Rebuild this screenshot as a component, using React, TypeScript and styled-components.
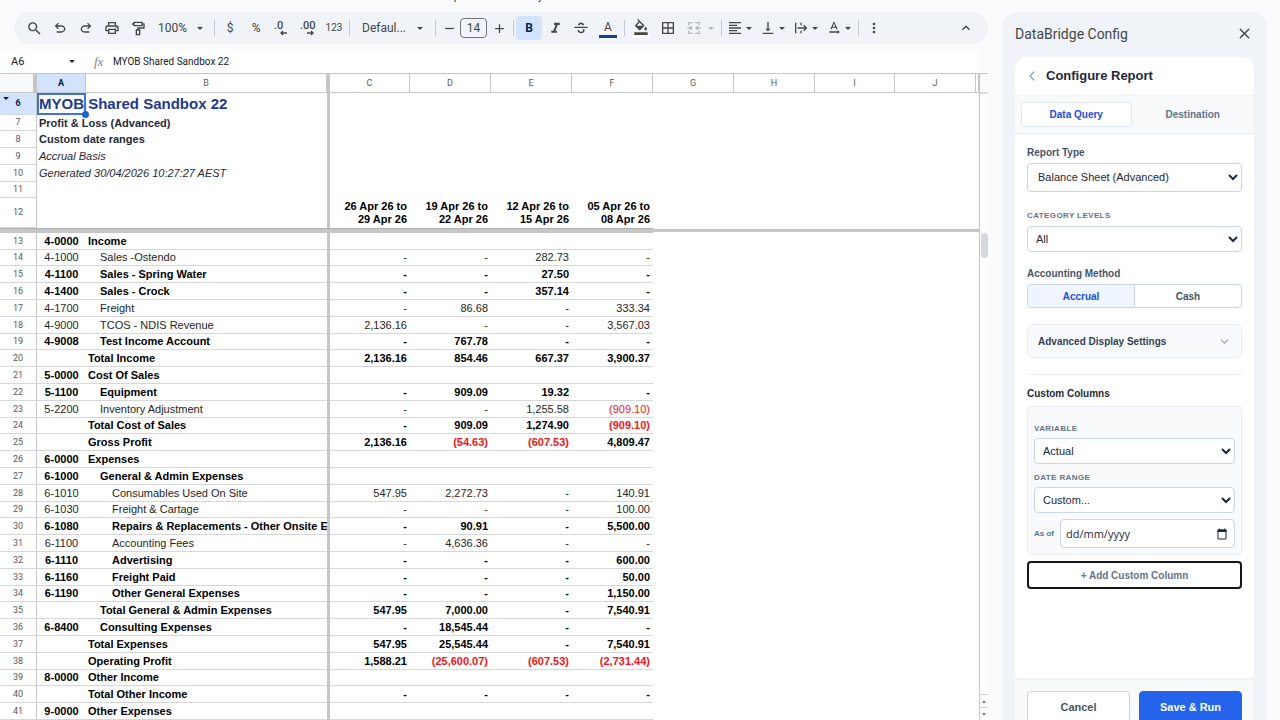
import React from "react";
import styled, { createGlobalStyle, css } from "styled-components";
import {
  MdSearch,
  MdOutlinePrint,
  MdFormatItalic,
  MdBorderAll,
  MdFormatAlignLeft,
  MdVerticalAlignBottom,
  MdTextRotationNone,
  MdMoreVert,
  MdKeyboardArrowUp,
  MdFormatColorFill,
  MdAdd,
  MdRemove,
} from "react-icons/md";
import { ChevronDown, ChevronLeft, X } from "lucide-react";

const ui = `Roboto, "Liberation Sans", sans-serif`;
const sans = `"Liberation Sans", Arial, sans-serif`;

const Global = createGlobalStyle`
  *, *::before, *::after { box-sizing: border-box; }
  body { margin: 0; background: #f9fbfd; font-family: ${sans}; color: #1f2937; }
  button, input, select { font: inherit; color: inherit; margin: 0; }
  button { padding: 0; border: 0; background: none; cursor: pointer; }
`;

const Page = styled.div`
  display: flex;
  height: 100vh;
  overflow: hidden;
`;

/* ---------- spreadsheet side ---------- */

const Main = styled.main`
  flex: 1;
  min-width: 0;
  display: flex;
  flex-direction: column;
`;

const MenuBar = styled.nav`
  display: flex;
  align-items: flex-end;
  flex: none;
  height: 3px;
  margin-bottom: 9px;
  padding-left: 53px;
  overflow: hidden;
  font: 400 12px/16px ${ui};
  color: #444746;
`;

const MenuItem = styled.button`
  padding: 0 8px;
  flex: none;
`;

const Toolbar = styled.div`
  display: flex;
  align-items: center;
  flex: none;
  height: 32px;
  margin: 0 2px 6px 14px;
  padding: 0 9px 0 7px;
  border-radius: 16px;
  background: #f0f4f9;
  color: #444746;
  font: 400 12px/16px ${ui};
`;

const Tool = styled.button<{ $w?: number; $on?: boolean; $end?: boolean }>`
  display: flex;
  align-items: center;
  justify-content: center;
  flex: none;
  width: ${(p) => p.$w ?? 26}px;
  height: 24px;
  border-radius: 4px;
  ${(p) => p.$on && css`background: #d3e3fd; color: #041e49; font-weight: 700;`}
  ${(p) => p.$end && css`margin-left: auto;`}
`;

const DropTool = styled(Tool)<{ $gap?: number; $pad?: number; $end2?: number }>`
  width: auto;
  gap: ${(p) => p.$gap ?? 2}px;
  padding: 0 ${(p) => p.$end2 ?? 4}px 0 ${(p) => p.$pad ?? 3}px;
`;

const MutedTools = styled.span`
  display: contents;
  button { color: #b4b8bc; }
`;

const SmallText = styled.span`
  font-size: 10px;
`;

const Sep = styled.span`
  flex: none;
  width: 1px;
  height: 16px;
  margin: 0 2px;
  background: #c7cbd1;
`;

const SizeInput = styled.input`
  flex: none;
  width: 27px;
  height: 20px;
  padding: 0;
  border: 1px solid #747775;
  border-radius: 4px;
  background: none;
  text-align: center;
`;

const Swatched = styled.span<{ $bar: string }>`
  display: flex;
  flex-direction: column;
  align-items: center;
  width: 18px;
  border-bottom: 3px solid ${(p) => p.$bar};
  line-height: 16px;
`;

const FormulaBar = styled.div`
  display: flex;
  align-items: center;
  flex: none;
  height: 23px;
  margin-right: 11px;
  background: #fff;
  font: 400 11px/16px ${ui};
  color: #202124;
`;

const NameBox = styled.button`
  display: flex;
  align-items: center;
  justify-content: space-between;
  width: 84px;
  padding: 0 8px 0 11px;
`;

const Fx = styled.span`
  width: 29px;
  padding-left: 10px;
  font: italic 400 13px/16px "Liberation Serif", serif;
  color: #80868b;
`;

const FormulaInput = styled.input`
  flex: 1;
  min-width: 0;
  height: 20px;
  padding: 0;
  border: 0;
  background: none;
  outline: 0;
  font-size: 10px;
`;

const SheetArea = styled.div`
  display: flex;
  flex: 1;
  min-height: 0;
  margin-right: 2px;
  border-top: 1px solid #c4c7c5;
`;

const GridWrap = styled.div`
  flex: 1;
  min-width: 0;
  overflow: hidden;
  border-right: 1px solid #c4c7c5;
  background: #fff;
`;

const Grid = styled.table`
  width: 100%;
  table-layout: fixed;
  border-collapse: separate;
  border-spacing: 0;
  font-size: 11px;
  line-height: 13px;
  color: #000;
  td, th { padding: 0; white-space: nowrap; }
`;

const Col = styled.col<{ $w?: number }>`
  ${(p) => p.$w && css`width: ${p.$w}px;`}
`;

const HeadRow = styled.tr`
  height: 19px;
`;

const ColHead = styled.th<{ $on?: boolean }>`
  border-bottom: 1px solid #c4c7c5;
  border-right: 1px solid #c4c7c5;
  font: ${(p) => (p.$on ? 700 : 400)} 9px/12px ${ui};
  color: ${(p) => (p.$on ? "#041e49" : "#575b5f")};
  background: ${(p) => (p.$on ? "#d3e3fd" : "#fff")};
`;

const Corner = styled.th`
  border-right: 4px solid #c4c7c5;
  border-bottom: 1px solid #c4c7c5;
  background: #f8f9fa;
`;

const Divider = styled.td`
  background: #c6c6c6;
`;

const RowHead = styled.th<{ $on?: boolean }>`
  position: relative;
  border-right: 1px solid #c4c7c5;
  border-bottom: 1px solid #d5d7d9;
  font: ${(p) => (p.$on ? 700 : 400)} 9px/11px ${ui};
  color: ${(p) => (p.$on ? "#041e49" : "#575b5f")};
  background: ${(p) => (p.$on ? "#d3e3fd" : "#fff")};
`;

const GroupMark = styled.span`
  position: absolute;
  left: 2px;
  top: 3px;
  line-height: 0;
`;

const FrozenRow = styled.tr<{ $h: number }>`
  height: ${(p) => p.$h}px;
`;

const Meta = styled.td<{ $kind?: "title" | "bold" | "italic" }>`
  position: relative;
  && { padding-left: 2px; }
  color: #1f2937;
  ${(p) => p.$kind === "title" && css`font-size: 15px; line-height: 18px; font-weight: 700; color: #1e3a8a;`}
  ${(p) => p.$kind === "bold" && css`font-weight: 700;`}
  ${(p) => p.$kind === "italic" && css`font-style: italic;`}
`;

const Selection = styled.span`
  position: absolute;
  left: 0;
  top: 0;
  width: 49px;
  height: 22px;
  border: 2px solid #3b74e0;
  &::after {
    content: "";
    position: absolute;
    right: -5px;
    bottom: -5px;
    width: 7px;
    height: 7px;
    border-radius: 50%;
    background: #1f5fd6;
  }
`;

const Period = styled.th`
  && { padding: 0 3px 2px 0; white-space: pre-line; }
  vertical-align: bottom;
  text-align: right;
  font-weight: 700;
`;

const FreezeRow = styled.tr`
  height: 5px;
  line-height: 0;
`;

const FreezeCell = styled.td<{ $slim?: boolean }>`
  background: #c6c6c6;
  ${(p) =>
    p.$slim
      ? css`border-top: 1px solid #fff; border-bottom: 1px solid #fff;`
      : css`border-top: 1px solid #aeb0b0;`}
`;

const DataRow = styled.tr<{ $bold?: boolean }>`
  height: 17px;
  font-weight: ${(p) => (p.$bold ? 700 : 400)};
  color: ${(p) => (p.$bold ? "#000" : "#262626")};
  &:nth-child(5n + 2) { height: 16px; }
`;

const Code = styled.td`
  border-bottom: 1px solid #d5d7d9;
  text-align: center;
`;

const Name = styled.td<{ $level: number }>`
  && { padding-left: ${(p) => 2 + p.$level * 12}px; }
  border-bottom: 1px solid #d5d7d9;
  overflow: hidden;
`;

const Amount = styled.td<{ $neg?: boolean }>`
  && { padding-right: 3px; }
  border-bottom: 1px solid #d5d7d9;
  text-align: right;
  ${(p) => p.$neg && css`color: #f31414;`}
`;

const ScrollTrack = styled.div`
  display: flex;
  flex-direction: column;
  width: 8px;
  background: #fcfdfe;
`;

const TrackHead = styled.div`
  height: 20px;
  border-bottom: 2px solid #dcdee0;
  background: #f9fbfd;
`;

const Thumb = styled.div`
  width: 7px;
  height: 25px;
  margin: 139px 0 auto 1px;
  border-radius: 4px;
  background: #d5d8dc;
`;

const ScrollStep = styled.button`
  display: flex;
  align-items: center;
  justify-content: center;
  height: 13px;
  border-top: 1px solid #d0d3d6;
  color: #80868b;
`;

/* ---------- add-on panel ---------- */

const Panel = styled.aside`
  flex: none;
  width: 265px;
  min-height: calc(100vh + 12px);
  align-self: flex-start;
  display: flex;
  flex-direction: column;
  margin: 12px 13px 0 12px;
  padding: 0 13px;
  border-radius: 16px;
  background: #f0f4f9;
`;

const PanelTitle = styled.header`
  display: flex;
  align-items: center;
  justify-content: space-between;
  height: 45px;
  padding: 0 1px 2px 0;
  font: 400 14px/20px ${ui};
  color: #444746;
`;

const Card = styled.div`
  flex: 1;
  display: flex;
  flex-direction: column;
  border-radius: 12px 12px 0 0;
  overflow: hidden;
  background: #fff;
`;

const CardHead = styled.div`
  display: flex;
  align-items: center;
  gap: 6px;
  height: 38px;
  padding-left: 9px;
  color: #94a3b8;
`;

const CardTitle = styled.h2`
  margin: 0;
  font-size: 13px;
  line-height: 16px;
  font-weight: 700;
  color: #1e293b;
`;

const Tabs = styled.div`
  display: flex;
  gap: 6px;
  padding: 6px;
  border-top: 1px solid #eef2f6;
  border-bottom: 1px solid #eaeef3;
  background: #f8fafc;
`;

const Tab = styled.button<{ $on?: boolean }>`
  flex: 1;
  height: 25px;
  border-radius: 4px;
  border: 1px solid transparent;
  font-size: 10px;
  font-weight: 700;
  color: #64748b;
  ${(p) => p.$on && css`background: #fff; border-color: #e2e8f0; color: #1d4ed8;`}
`;

const Form = styled.form`
  flex: 1;
  display: flex;
  flex-direction: column;
  padding: 13px 12px;
`;

const Label = styled.label<{ $caps?: boolean }>`
  font-weight: 700;
  font-size: 10px;
  line-height: 12px;
  color: #475569;
  ${(p) => p.$caps && css`
    font-size: 8px;
    letter-spacing: 0.05em;
    text-transform: uppercase;
    color: #64748b;
  `}
`;

const Field = styled.div<{ $mb: number; $tight?: boolean }>`
  display: flex;
  flex-direction: column;
  gap: ${(p) => (p.$tight ? 3 : 4)}px;
  margin-bottom: ${(p) => p.$mb}px;
`;

const Select = styled.select<{ $tall?: boolean }>`
  width: 100%;
  height: ${(p) => (p.$tall ? 29 : 26)}px;
  padding: 0 0 1px ${(p) => (p.$tall ? 6 : 4)}px;
  border: 1px solid #cbd5e1;
  border-radius: 4px;
  background: #fff;
  font-size: 11px;
  color: #1e293b;
`;

const Segments = styled.div`
  display: flex;
  height: 24px;
  border: 1px solid #cbd5e1;
  border-radius: 4px;
  overflow: hidden;
`;

const Segment = styled.button<{ $on?: boolean }>`
  flex: 1;
  font-size: 10px;
  font-weight: 700;
  color: #475569;
  ${(p) => p.$on && css`background: #eff6ff; color: #1d4ed8; border-right: 1px solid #cbd5e1;`}
`;

const Disclosure = styled.button`
  display: flex;
  align-items: center;
  justify-content: space-between;
  height: 34px;
  padding: 0 10px;
  border: 1px solid #e8edf3;
  border-radius: 6px;
  background: #f8fafc;
  font-size: 10px;
  font-weight: 700;
  color: #334155;
`;

const Rule = styled.hr`
  width: 100%;
  height: 1px;
  margin: 16px 0 13px;
  border: 0;
  background: #e8edf3;
`;

const SectionTitle = styled.h3`
  margin: 0 0 6px;
  font-size: 10px;
  line-height: 12px;
  font-weight: 700;
  color: #1e293b;
`;

const ColumnCard = styled.div`
  padding: 16px 6px 6px;
  border: 1px solid #e8edf3;
  border-radius: 4px;
  background: #f8fafc;
`;

const DateRow = styled.div`
  display: flex;
  align-items: center;
  gap: 6px;
`;

const DateLabel = styled.label`
  flex: none;
  font-size: 8px;
  line-height: 12px;
  font-weight: 700;
  color: #64748b;
`;

const DateBox = styled.div`
  flex: 1;
  min-width: 0;
  display: flex;
  align-items: center;
  height: 29px;
  padding: 0 6px 0 5px;
  border: 1px solid #cbd5e1;
  border-radius: 4px;
  background: #fff;
`;

const DateInput = styled.input`
  flex: 1;
  min-width: 0;
  padding: 0;
  border: 0;
  outline: 0;
  background: none;
  font: 400 11px/16px "Open Sans", sans-serif;
  &::placeholder { color: #1e293b; opacity: 1; }
`;

const IconButton = styled.button`
  line-height: 0;
`;

const AddButton = styled.button`
  height: 28px;
  margin-top: 6px;
  border: 2px solid #14161a;
  border-radius: 4px;
  background: #fff;
  font-size: 10px;
  font-weight: 700;
  color: #64748b;
`;

const Footer = styled.footer`
  display: flex;
  gap: 9px;
  height: 66px;
  padding: 11px 12px;
  border-top: 2px solid #eef2f6;
  background: #f8fafc;
`;

const ActionButton = styled.button<{ $primary?: boolean }>`
  flex: 1;
  height: 32px;
  border: 1px solid ${(p) => (p.$primary ? "#2563eb" : "#cbd5e1")};
  border-radius: 4px;
  background: ${(p) => (p.$primary ? "#2563eb" : "#fff")};
  color: ${(p) => (p.$primary ? "#fff" : "#475569")};
  font-size: 11px;
  font-weight: 700;
`;

/* ---------- glyphs ---------- */

const Caret = () => (
  <svg width="8" height="5" viewBox="0 0 8 5" aria-hidden="true">
    <path d="M1 1h6L4 4z" fill="currentColor" />
  </svg>
);

const Symbol = ({ d }: { d: string }) => (
  <svg width="16" height="16" viewBox="0 -960 960 960" fill="currentColor" aria-hidden="true">
    <path d={d} />
  </svg>
);

const UNDO =
  "M280-200v-80h284q63 0 109.500-40T720-420q0-60-46.500-100T564-560H312l104 104-56 56-200-200 200-200 56 56-104 104h252q97 0 169.500 63T800-420q0 94-72.500 157T564-200H280Z";
const REDO =
  "M396-200q-97 0-169.500-63T160-420q0-94 72.500-157T396-640h252L544-744l56-56 200 200-200 200-56-56 104-104H396q-63 0-109.500 40T240-420q0 60 46.500 100T396-280h284v80H396Z";
const STRIKE =
  "M486-160q-76 0-135-45t-85-123l88-38q14 48 48.500 79t85.500 31q42 0 76-20t34-64q0-18-7-33t-19-27h112q5 14 7.500 28.500t2.500 31.500q0 86-61.500 133T486-160ZM80-480v-80h800v80H80Zm402-326q66 0 115.500 32.500T674-674l-88 39q-9-29-33.500-52T484-710q-41 0-68 18.500T386-640h-96q2-69 54.500-117.500T482-806Z";

const Line = ({ children, size = 16 }: { children: React.ReactNode; size?: number }) => (
  <svg width={size} height={size} viewBox="0 0 24 24" fill="none" stroke="currentColor" strokeWidth="2" aria-hidden="true">
    {children}
  </svg>
);

const PaintFormat = () => (
  <Line>
    <path d="M6 3.500h12v5H6zM6 6H3M18 6h3v6h-9v3M9.500 15h5v7h-5z" />
  </Line>
);

const MergeCells = () => (
  <Line>
    <path d="M4 8V4h6M20 8V4h-6M4 16v4h6M20 16v4h-6M2 12h7M22 12h-7M6.500 9.500L9 12l-2.500 2.500M17.500 9.500L15 12l2.500 2.500" />
  </Line>
);

const Overflow = () => (
  <Line>
    <path d="M4 4v16M12 4v4M12 16v4M7 12h13M16 8l4 4-4 4" />
  </Line>
);

const Decimals = ({ label, right }: { label: string; right?: boolean }) => (
  <svg width="18" height="18" viewBox="0 0 18 18" aria-hidden="true">
    <text x="1" y="10" fontFamily="Roboto, sans-serif" fontSize="11" fontWeight="500" fill="currentColor">
      {label}
    </text>
    <path
      d={right ? "M8 14h6M12 12l2 2-2 2" : "M14 14H8M10 12l-2 2 2 2"}
      fill="none"
      stroke="currentColor"
      strokeWidth="1.300"
    />
  </svg>
);

const Calendar = () => (
  <svg width="12" height="12" viewBox="0 0 12 12" aria-hidden="true">
    <path d="M2 2h8v9H2z" fill="none" stroke="#1e293b" />
    <path d="M1.500 1.500h9v2.500h-9zM3 .5h1v1H3zM8 .5h1v1H8z" fill="#1e293b" />
  </svg>
);

/* ---------- data ---------- */

const MENUS = ["File", "Edit", "View", "Insert", "Format", "Data", "Tools", "Extensions", "Help", "Accessibility"];
const PERIODS = [
  "26 Apr 26 to\n29 Apr 26",
  "19 Apr 26 to\n22 Apr 26",
  "12 Apr 26 to\n15 Apr 26",
  "05 Apr 26 to\n08 Apr 26",
];

type Row = [code: string, name: string, level: number, bold: boolean, amounts: string[]];

const NONE = ["", "", "", ""];
const ROWS: Row[] = [
  ["4-0000", "Income", 0, true, NONE],
  ["4-1000", "Sales -Ostendo", 1, false, ["-", "-", "282.73", "-"]],
  ["4-1100", "Sales - Spring Water", 1, true, ["-", "-", "27.50", "-"]],
  ["4-1400", "Sales - Crock", 1, true, ["-", "-", "357.14", "-"]],
  ["4-1700", "Freight", 1, false, ["-", "86.68", "-", "333.34"]],
  ["4-9000", "TCOS - NDIS Revenue", 1, false, ["2,136.16", "-", "-", "3,567.03"]],
  ["4-9008", "Test Income Account", 1, true, ["-", "767.78", "-", "-"]],
  ["", "Total Income", 0, true, ["2,136.16", "854.46", "667.37", "3,900.37"]],
  ["5-0000", "Cost Of Sales", 0, true, NONE],
  ["5-1100", "Equipment", 1, true, ["-", "909.09", "19.32", "-"]],
  ["5-2200", "Inventory Adjustment", 1, false, ["-", "-", "1,255.58", "(909.10)"]],
  ["", "Total Cost of Sales", 0, true, ["-", "909.09", "1,274.90", "(909.10)"]],
  ["", "Gross Profit", 0, true, ["2,136.16", "(54.63)", "(607.53)", "4,809.47"]],
  ["6-0000", "Expenses", 0, true, NONE],
  ["6-1000", "General & Admin Expenses", 1, true, NONE],
  ["6-1010", "Consumables Used On Site", 2, false, ["547.95", "2,272.73", "-", "140.91"]],
  ["6-1030", "Freight & Cartage", 2, false, ["-", "-", "-", "100.00"]],
  ["6-1080", "Repairs & Replacements - Other Onsite Equipment", 2, true, ["-", "90.91", "-", "5,500.00"]],
  ["6-1100", "Accounting Fees", 2, false, ["-", "4,636.36", "-", "-"]],
  ["6-1110", "Advertising", 2, true, ["-", "-", "-", "600.00"]],
  ["6-1160", "Freight Paid", 2, true, ["-", "-", "-", "50.00"]],
  ["6-1190", "Other General Expenses", 2, true, ["-", "-", "-", "1,150.00"]],
  ["", "Total General & Admin Expenses", 1, true, ["547.95", "7,000.00", "-", "7,540.91"]],
  ["6-8400", "Consulting Expenses", 1, true, ["-", "18,545.44", "-", "-"]],
  ["", "Total Expenses", 0, true, ["547.95", "25,545.44", "-", "7,540.91"]],
  ["", "Operating Profit", 0, true, ["1,588.21", "(25,600.07)", "(607.53)", "(2,731.44)"]],
  ["8-0000", "Other Income", 0, true, NONE],
  ["", "Total Other Income", 0, true, ["-", "-", "-", "-"]],
  ["9-0000", "Other Expenses", 0, true, NONE],
];

const META: { n: number; h: number; kind?: "title" | "bold" | "italic"; text: string }[] = [
  { n: 6, h: 22, kind: "title", text: "MYOB Shared Sandbox 22" },
  { n: 7, h: 16, kind: "bold", text: "Profit & Loss (Advanced)" },
  { n: 8, h: 17, kind: "bold", text: "Custom date ranges" },
  { n: 9, h: 17, kind: "italic", text: "Accrual Basis" },
  { n: 10, h: 17, kind: "italic", text: "Generated 30/04/2026 10:27:27 AEST" },
  { n: 11, h: 16, text: "" },
];

const COLS = [37, 49, 241, 3, 80, 81, 81, 81, 81, 81, 80, 81];

const Sheet = () => (
  <Grid>
    <colgroup>
      {COLS.map((w, i) => (
        <Col key={i} $w={w} />
      ))}
      <Col />
    </colgroup>
    <thead>
      <HeadRow>
        <Corner />
        <ColHead $on>A</ColHead>
        <ColHead>B</ColHead>
        <Divider />
        {["C", "D", "E", "F", "G", "H", "I", "J", ""].map((c, i) => (
          <ColHead key={i}>{c}</ColHead>
        ))}
      </HeadRow>
      {META.map((m) => (
        <FrozenRow key={m.n} $h={m.h}>
          <RowHead scope="row" $on={m.n === 6}>
            {m.n === 6 && (
              <GroupMark>
                <Caret />
              </GroupMark>
            )}
            {m.n}
          </RowHead>
          <Meta colSpan={2} $kind={m.kind}>
            {m.text}
            {m.n === 6 && <Selection />}
          </Meta>
          <Divider />
          <td colSpan={9} />
        </FrozenRow>
      ))}
      <FrozenRow $h={30}>
        <RowHead scope="row">12</RowHead>
        <Meta colSpan={2} />
        <Divider />
        {PERIODS.map((p) => (
          <Period key={p} scope="col">
            {p}
          </Period>
        ))}
        <td colSpan={5} />
      </FrozenRow>
      <FreezeRow>
        <FreezeCell colSpan={8} />
        <FreezeCell colSpan={5} $slim />
      </FreezeRow>
    </thead>
    <tbody>
      {ROWS.map(([code, name, level, bold, amounts], i) => (
        <DataRow key={i} $bold={bold}>
          <RowHead scope="row">{i + 13}</RowHead>
          <Code>{code}</Code>
          <Name $level={level}>{name}</Name>
          <Divider />
          {amounts.map((a, j) => (
            <Amount key={j} $neg={a.startsWith("(")}>
              {a}
            </Amount>
          ))}
          <td colSpan={5} />
        </DataRow>
      ))}
    </tbody>
  </Grid>
);

const SheetToolbar = () => (
  <Toolbar role="toolbar" aria-label="Formatting">
    <Tool aria-label="Search"><MdSearch size={17} /></Tool>
    <Tool aria-label="Undo"><Symbol d={UNDO} /></Tool>
    <Tool aria-label="Redo"><Symbol d={REDO} /></Tool>
    <Tool aria-label="Print"><MdOutlinePrint size={16} /></Tool>
    <Tool aria-label="Paint format"><PaintFormat /></Tool>
    <DropTool $gap={9} $pad={7} $end2={8} aria-label="Zoom">100% <Caret /></DropTool>
    <Sep />
    <Tool>$</Tool>
    <Tool>%</Tool>
    <Tool aria-label="Decrease decimal places"><Decimals label=".0" /></Tool>
    <Tool aria-label="Increase decimal places"><Decimals label=".00" right /></Tool>
    <Tool><SmallText>123</SmallText></Tool>
    <Sep />
    <DropTool $gap={10} $pad={10} $end2={9} aria-label="Font">Defaul... <Caret /></DropTool>
    <Sep />
    <Tool $w={22} aria-label="Decrease font size"><MdRemove size={15} /></Tool>
    <SizeInput aria-label="Font size" defaultValue="14" />
    <Tool $w={24} aria-label="Increase font size"><MdAdd size={15} /></Tool>
    <Sep />
    <Tool $on>B</Tool>
    <Tool aria-label="Italic"><MdFormatItalic size={17} /></Tool>
    <Tool aria-label="Strikethrough"><Symbol d={STRIKE} /></Tool>
    <Tool $w={28} aria-label="Text color"><Swatched $bar="#1e3a8a">A</Swatched></Tool>
    <Sep />
    <Tool $w={28} aria-label="Fill color"><Swatched $bar="#fff"><MdFormatColorFill size={16} /></Swatched></Tool>
    <Tool aria-label="Borders"><MdBorderAll size={16} /></Tool>
    <MutedTools>
      <DropTool disabled $gap={5} $pad={5} aria-label="Merge cells"><MergeCells /><Caret /></DropTool>
    </MutedTools>
    <Sep />
    <DropTool aria-label="Horizontal align"><MdFormatAlignLeft size={16} /><Caret /></DropTool>
    <DropTool aria-label="Vertical align"><MdVerticalAlignBottom size={16} /><Caret /></DropTool>
    <DropTool aria-label="Text wrapping"><Overflow /><Caret /></DropTool>
    <DropTool aria-label="Text rotation"><MdTextRotationNone size={16} /><Caret /></DropTool>
    <Sep />
    <Tool aria-label="More"><MdMoreVert size={16} /></Tool>
    <Tool $end aria-label="Hide the menus"><MdKeyboardArrowUp size={16} /></Tool>
  </Toolbar>
);

const ConfigPanel = () => (
  <Panel>
    <PanelTitle>
      DataBridge Config
      <IconButton aria-label="Close"><X size={17} /></IconButton>
    </PanelTitle>
    <Card>
      <CardHead>
        <IconButton aria-label="Back"><ChevronLeft size={16} /></IconButton>
        <CardTitle>Configure Report</CardTitle>
      </CardHead>
      <Tabs>
        <Tab $on>Data Query</Tab>
        <Tab>Destination</Tab>
      </Tabs>
      <Form onSubmit={(e) => e.preventDefault()}>
        <Field $mb={18}>
          <Label htmlFor="type">Report Type</Label>
          <Select id="type" $tall><option>Balance Sheet (Advanced)</option></Select>
        </Field>
        <Field $mb={16}>
          <Label htmlFor="levels" $caps>Category Levels</Label>
          <Select id="levels"><option>All</option></Select>
        </Field>
        <Field $mb={16}>
          <Label as="span" id="method">Accounting Method</Label>
          <Segments role="group" aria-labelledby="method">
            <Segment type="button" $on>Accrual</Segment>
            <Segment type="button">Cash</Segment>
          </Segments>
        </Field>
        <Disclosure type="button">
          Advanced Display Settings
          <ChevronDown size={13} color="#94a3b8" />
        </Disclosure>
        <Rule />
        <SectionTitle>Custom Columns</SectionTitle>
        <ColumnCard>
          <Field $mb={8} $tight>
            <Label htmlFor="variable" $caps>Variable</Label>
            <Select id="variable"><option>Actual</option></Select>
          </Field>
          <Field $mb={6} $tight>
            <Label htmlFor="range" $caps>Date Range</Label>
            <Select id="range"><option>Custom...</option></Select>
          </Field>
          <DateRow>
            <DateLabel htmlFor="asof">As of</DateLabel>
            <DateBox>
              <DateInput id="asof" placeholder="dd/mm/yyyy" />
              <IconButton type="button" aria-label="Pick a date"><Calendar /></IconButton>
            </DateBox>
          </DateRow>
        </ColumnCard>
        <AddButton type="button">+ Add Custom Column</AddButton>
      </Form>
      <Footer>
        <ActionButton>Cancel</ActionButton>
        <ActionButton $primary>Save &amp; Run</ActionButton>
      </Footer>
    </Card>
  </Panel>
);

export default function App() {
  return (
    <Page>
      <Global />
      <Main>
        <MenuBar>
          {MENUS.map((m) => (
            <MenuItem key={m}>{m}</MenuItem>
          ))}
        </MenuBar>
        <SheetToolbar />
        <FormulaBar>
          <NameBox aria-label="Name box">A6 <Caret /></NameBox>
          <Fx>fx</Fx>
          <FormulaInput aria-label="Formula" defaultValue="MYOB Shared Sandbox 22" />
        </FormulaBar>
        <SheetArea>
          <GridWrap>
            <Sheet />
          </GridWrap>
          <ScrollTrack>
            <TrackHead />
            <Thumb />
            <ScrollStep aria-label="Scroll up">
              <svg width="4" height="3" viewBox="0 0 4 3"><path d="M0 3h4L2 0z" fill="currentColor" /></svg>
            </ScrollStep>
            <ScrollStep aria-label="Scroll down">
              <svg width="4" height="3" viewBox="0 0 4 3"><path d="M0 0h4L2 3z" fill="currentColor" /></svg>
            </ScrollStep>
          </ScrollTrack>
        </SheetArea>
      </Main>
      <ConfigPanel />
    </Page>
  );
}
